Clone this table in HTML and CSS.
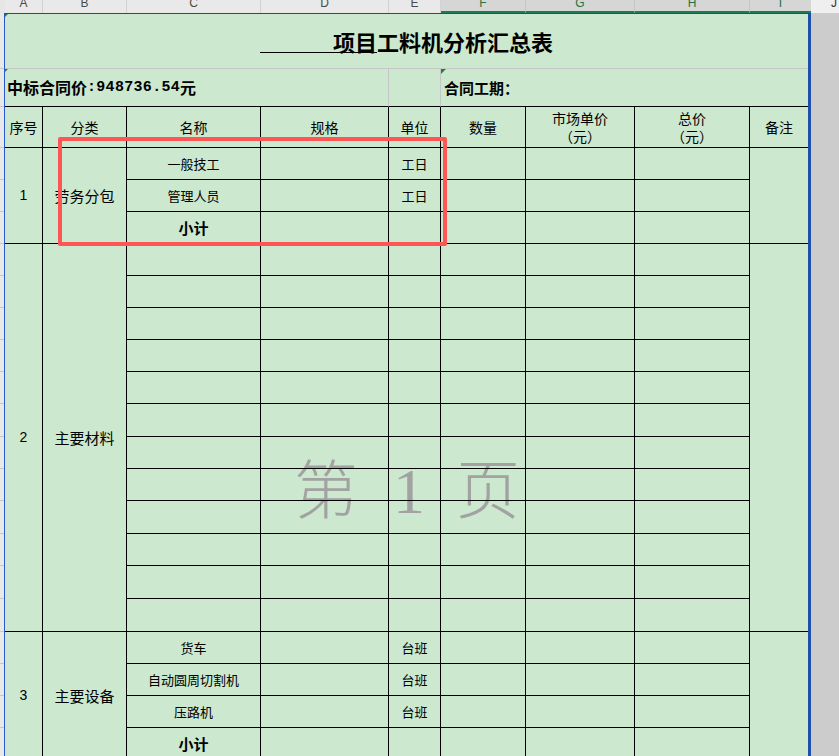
FILE: index.html
```html
<!DOCTYPE html>
<html lang="zh">
<head>
<meta charset="utf-8">
<title>项目工料机分析汇总表</title>
<link rel="stylesheet" href="styles.css">
</head>
<body>
<div class="colhead">
  <div class="ch corner"></div>
  <div class="ch w-a">A</div>
  <div class="ch w-b">B</div>
  <div class="ch w-c">C</div>
  <div class="ch w-d">D</div>
  <div class="ch w-e">E</div>
  <div class="ch w-f sel">F</div>
  <div class="ch w-g sel">G</div>
  <div class="ch w-h sel">H</div>
  <div class="ch w-i2 sel">I</div>
  <div class="ch w-j">J</div>
</div>
<div class="main">
  <div class="rowhead">
    <div class="rh h56"></div><div class="rh h38"></div><div class="rh h41"></div>
    <div class="rh h32"></div><div class="rh h32"></div><div class="rh h32"></div>
    <div class="rh h32"></div><div class="rh h32"></div><div class="rh h32"></div><div class="rh h32"></div>
    <div class="rh h32"></div><div class="rh h33"></div><div class="rh h32"></div><div class="rh h32"></div>
    <div class="rh h33"></div><div class="rh h32"></div><div class="rh h33"></div><div class="rh h33"></div>
    <div class="rh h32"></div><div class="rh h32"></div><div class="rh h32"></div><div class="rh h32"></div>
  </div>
  <div class="sheet">
    <div class="watermark"><span class="wm-ch">第</span><span class="wm-num">1</span><span class="wm-ch">页</span></div>
    <div class="grid">
      <div class="c title-cell"><span class="mark"></span><span class="title"><span class="ul">项目</span>工料机分析汇总表</span></div>

      <div class="c price"><span class="mark"></span>中标合同价<span class="mono">:948736.54</span>元</div>
      <div class="c price-e"></div>
      <div class="c period"><span class="mark big"></span>合同工期：</div>

      <div class="c hd">序号</div>
      <div class="c hd">分类</div>
      <div class="c hd">名称</div>
      <div class="c hd">规格</div>
      <div class="c hd">单位</div>
      <div class="c hd">数量</div>
      <div class="c hd two"><span class="ln">市场单价</span><span class="ln">（元）</span></div>
      <div class="c hd two"><span class="ln">总价</span><span class="ln">（元）</span></div>
      <div class="c hd last">备注</div>

      <!-- section 1 -->
      <div class="c num span3">1</div>
      <div class="c cat span3">劳务分包</div>
      <div class="c nm">一般技工</div><div class="c"></div><div class="c un">工日</div><div class="c"></div><div class="c"></div><div class="c"></div>
      <div class="c last span3"></div>
      <div class="c nm">管理人员</div><div class="c"></div><div class="c un">工日</div><div class="c"></div><div class="c"></div><div class="c"></div>
      <div class="c sub">小计</div><div class="c"></div><div class="c"></div><div class="c"></div><div class="c"></div><div class="c"></div>

      <!-- section 2 -->
      <div class="c num span12">2</div>
      <div class="c cat span12">主要材料</div>
      <div class="c"></div><div class="c"></div><div class="c"></div><div class="c"></div><div class="c"></div><div class="c"></div>
      <div class="c last span12"></div>
      <div class="c"></div><div class="c"></div><div class="c"></div><div class="c"></div><div class="c"></div><div class="c"></div>
      <div class="c"></div><div class="c"></div><div class="c"></div><div class="c"></div><div class="c"></div><div class="c"></div>
      <div class="c"></div><div class="c"></div><div class="c"></div><div class="c"></div><div class="c"></div><div class="c"></div>
      <div class="c"></div><div class="c"></div><div class="c"></div><div class="c"></div><div class="c"></div><div class="c"></div>
      <div class="c"></div><div class="c"></div><div class="c"></div><div class="c"></div><div class="c"></div><div class="c"></div>
      <div class="c"></div><div class="c"></div><div class="c"></div><div class="c"></div><div class="c"></div><div class="c"></div>
      <div class="c"></div><div class="c"></div><div class="c"></div><div class="c"></div><div class="c"></div><div class="c"></div>
      <div class="c"></div><div class="c"></div><div class="c"></div><div class="c"></div><div class="c"></div><div class="c"></div>
      <div class="c"></div><div class="c"></div><div class="c"></div><div class="c"></div><div class="c"></div><div class="c"></div>
      <div class="c"></div><div class="c"></div><div class="c"></div><div class="c"></div><div class="c"></div><div class="c"></div>
      <div class="c"></div><div class="c"></div><div class="c"></div><div class="c"></div><div class="c"></div><div class="c"></div>

      <!-- section 3 -->
      <div class="c num span4">3</div>
      <div class="c cat span4">主要设备</div>
      <div class="c nm">货车</div><div class="c"></div><div class="c un">台班</div><div class="c"></div><div class="c"></div><div class="c"></div>
      <div class="c last span4"></div>
      <div class="c nm">自动圆周切割机</div><div class="c"></div><div class="c un">台班</div><div class="c"></div><div class="c"></div><div class="c"></div>
      <div class="c nm">压路机</div><div class="c"></div><div class="c un">台班</div><div class="c"></div><div class="c"></div><div class="c"></div>
      <div class="c sub">小计</div><div class="c"></div><div class="c"></div><div class="c"></div><div class="c"></div><div class="c"></div>
    </div>
    <div class="redbox"></div>
  </div>
  <div class="gutter"></div>
</div>
</body>
</html>
```

FILE: styles.css
```css
* { box-sizing: border-box; margin: 0; padding: 0; }
html, body { width: 839px; height: 756px; overflow: hidden; }
body {
  background: #cccccc;
  font-family: "Noto Sans CJK SC", sans-serif;
  color: #000;
}

/* column letters */
.colhead { display: flex; height: 13px; background: #e9e9e9; }
.ch {
  flex: none;
  height: 13px;
  overflow: hidden;
  border-right: 1px solid #d2d2d2;
  font: 12px/6px "Liberation Sans", Arial, sans-serif;
  color: #4a4a4a;
  text-align: center;
}
.corner { width: 5px; border-right: none; background: #e6e6e6; }
.w-a { width: 38px; }
.w-b { width: 84px; }
.w-c { width: 134px; }
.w-d { width: 128px; }
.w-e { width: 52px; }
.w-f { width: 85px; }
.w-g { width: 109px; }
.w-h { width: 115px; }
.w-i2 { width: 61px; border-right: none; }
.sel { background: #d6d6d6; color: #217346; border-bottom: 2px solid #1e7b55; border-right-color: #c6c6c6; }
.w-j { flex: 1; background: #efefef; border-right: none; text-align: right; padding-right: 2px; color: #333; }

/* body */
.main { display: flex; height: 743px; }
.rowhead { width: 4px; flex: none; background: #e9e9e9; display: flex; flex-direction: column; }
.rh { flex: none; border-bottom: 1px solid #c8c8c8; }
.h56 { height: 56px; }
.h41 { height: 41px; }
.h38 { height: 38px; }
.h32 { height: 32px; }
.h33 { height: 33px; }

.sheet {
  position: relative;
  flex: none;
  width: 807px;
  background: #cce8cf;
  border-left: 1px solid #2a58cf;
  border-top: 1px solid #1f47a8;
  border-right: 3px solid #1f4fae;
}
.gutter { flex: 1; background: #cccccc; }

.grid {
  position: relative;
  z-index: 1;
  display: grid;
  grid-template-columns: 38px 84px 134px 128px 52px 85px 109px 115px 58px;
  grid-template-rows: 55px 38px 41px 32px 32px 32px 32px 32px 32px 32px 32px 33px 32px 32px 33px 32px 33px 33px 32px 32px 32px 32px;
}
.c {
  position: relative;
  display: flex;
  align-items: center;
  justify-content: center;
  text-align: center;
  border-right: 1px solid #000;
  border-bottom: 1px solid #000;
  line-height: 1.2;
  white-space: nowrap;
}
.last { border-right: none; }
.span3 { grid-row: span 3; }
.span4 { grid-row: span 4; }
.span12 { grid-row: span 12; }

.title-cell {
  grid-column: 1 / -1;
  border-right: none;
  border-bottom: 1px solid #c6c6c6;
  padding-top: 1px;
}
.title { font-size: 22px; font-weight: 700; line-height: 22px; }
.ul { display: inline-block; padding-left: 73px; border-bottom: 1px solid #000; }

.price {
  grid-column: span 4;
  justify-content: flex-start;
  padding-left: 2px;
  padding-top: 1px;
  font-size: 16px;
  font-weight: 700;
  border-right-color: #c6c6c6;
}
.mono { font-family: "Liberation Mono", monospace; font-size: 15px; font-weight: 700; letter-spacing: 0.3px; }
.price-e { border-right-color: #c6c6c6; }
.period {
  grid-column: span 4;
  border-right: none;
  justify-content: flex-start;
  padding-left: 3px;
  padding-top: 1px;
  font-size: 15px;
  font-weight: 700;
}

.mark {
  position: absolute;
  top: 0;
  left: 0;
  width: 0;
  height: 0;
  border-top: 3px solid #1a8a32;
  border-right: 3px solid transparent;
}
.mark.big { border-top-width: 5px; border-right-width: 5px; }

.hd { font-size: 14px; }
.two { flex-direction: column; }
.ln { display: block; height: 18px; line-height: 18px; overflow: visible; }
.num { font-family: "Liberation Sans", Arial, sans-serif; font-size: 14px; }
.cat { font-size: 15px; }
.nm { font-size: 13px; }
.un { font-size: 13px; }
.sub { font-size: 15px; font-weight: 700; }

.watermark {
  position: absolute;
  z-index: 0;
  left: 289px;
  top: 439px;
  display: flex;
  align-items: baseline;
  color: #a2a2a2;
  font-size: 64px;
  line-height: 64px;
}
.wm-ch { font-family: "Noto Sans CJK SC", sans-serif; font-weight: 300; }
.wm-num { font-family: "Liberation Serif", serif; margin: 0 31px 0 35px; }

.redbox {
  position: absolute;
  z-index: 2;
  left: 53px;
  top: 123px;
  width: 389px;
  height: 109px;
  border: 4px solid #ff5555;
  border-radius: 2px;
}
```
